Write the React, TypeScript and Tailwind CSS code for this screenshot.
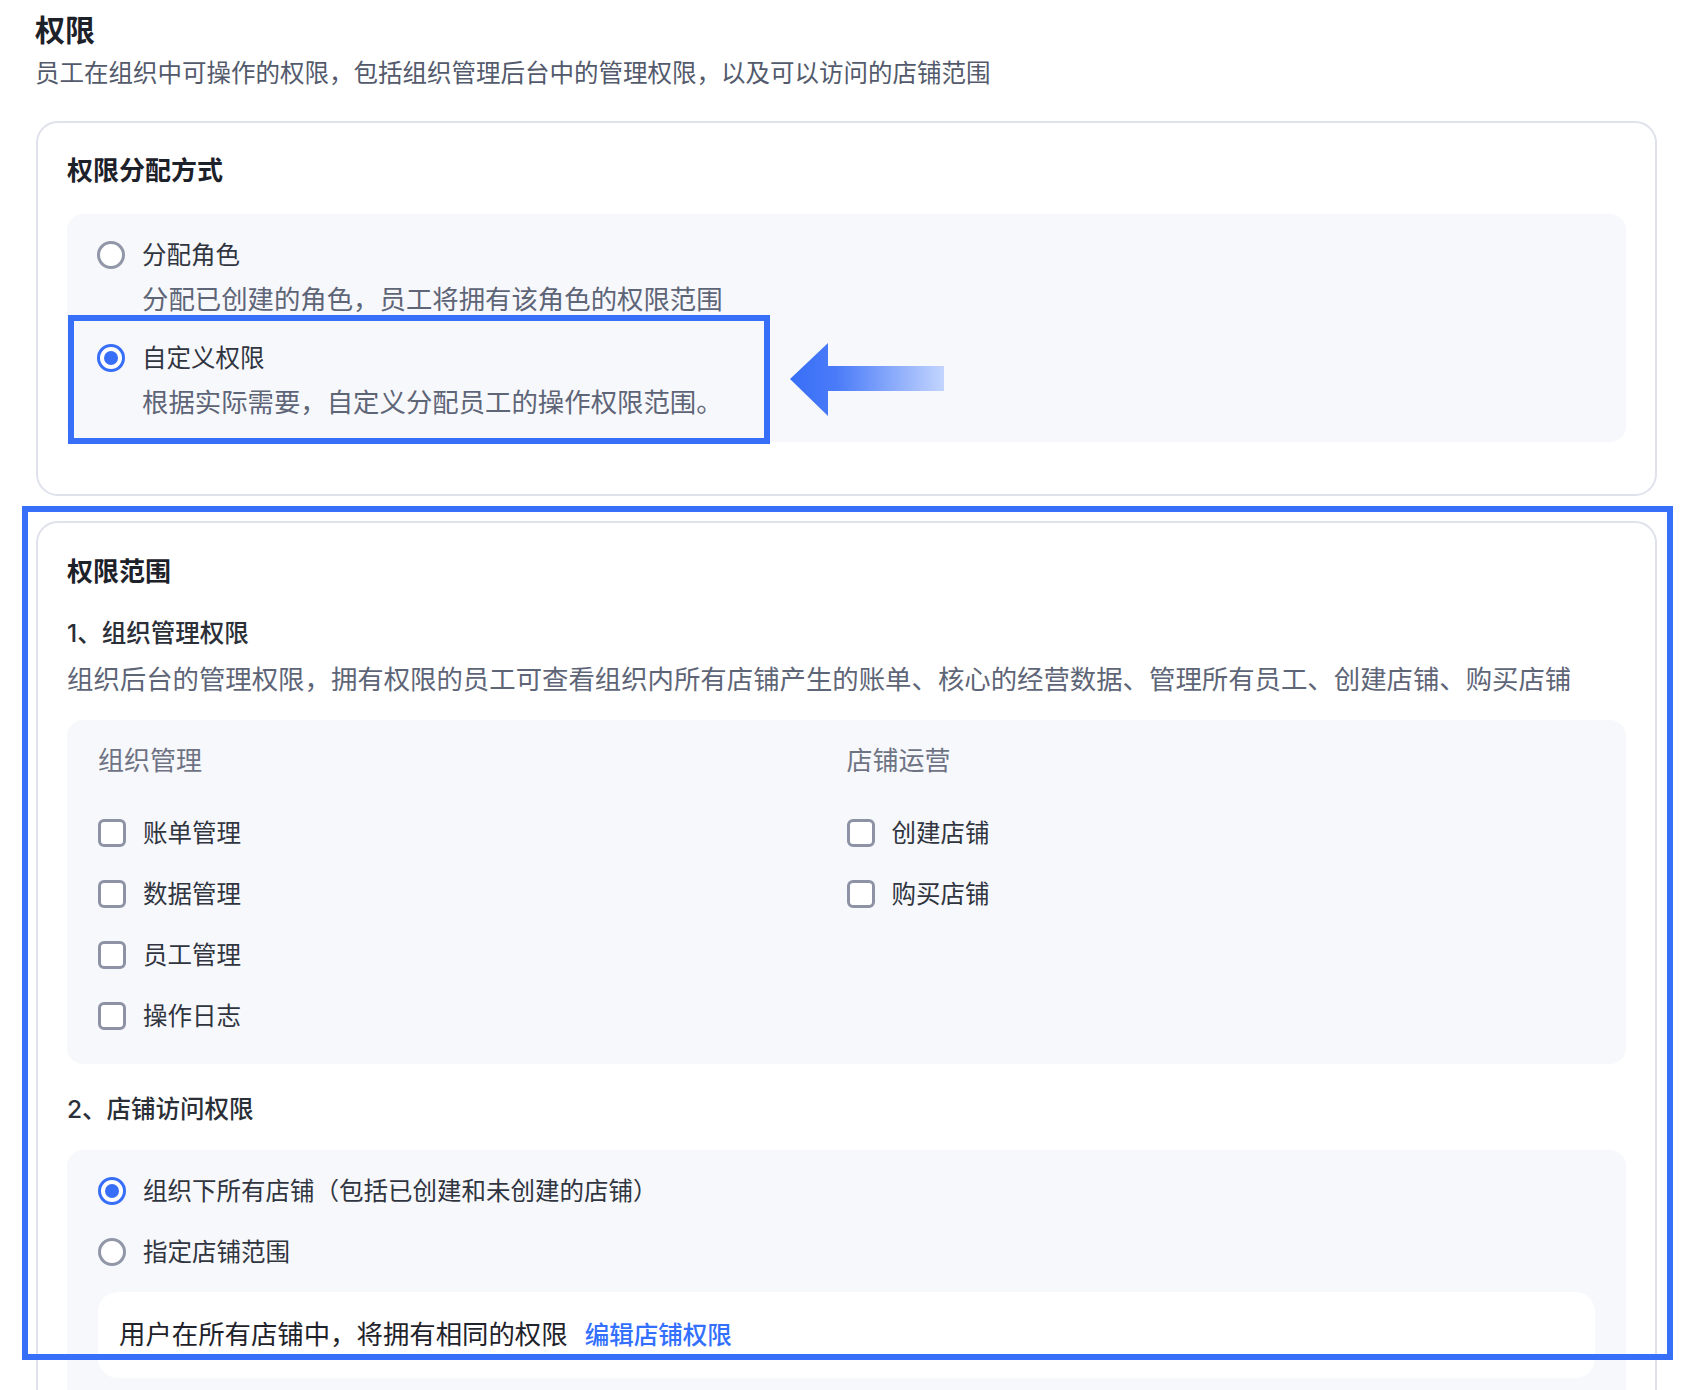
const FONT = "font-['Inter','Noto_Sans_CJK_SC',sans-serif]";

function Radio({ checked }: { checked?: boolean }) {
  return checked ? (
    <span className="flex h-[28px] w-[28px] shrink-0 items-center justify-center rounded-full border-[3px] border-[#386ff8] bg-white">
      <span className="h-[14px] w-[14px] rounded-full bg-[#386ff8]" />
    </span>
  ) : (
    <span className="h-[28px] w-[28px] shrink-0 rounded-full border-[3px] border-[#9197a8] bg-white" />
  );
}

function Checkbox() {
  return <span className="h-[28px] w-[28px] shrink-0 rounded-[6px] border-[3px] border-[#8d93a5] bg-white" />;
}

function CheckItem({ label }: { label: string }) {
  return (
    <div className="flex h-[36px] items-center gap-[17px]">
      <Checkbox />
      <span className="text-[24.5px] leading-[36px] text-[#30353f]">{label}</span>
    </div>
  );
}

function RadioLine({ label, checked }: { label: string; checked?: boolean }) {
  return (
    <div className="flex h-[36px] items-center gap-[17px]">
      <Radio checked={checked} />
      <span className="text-[24.5px] leading-[36px] text-[#30353f]">{label}</span>
    </div>
  );
}

export default function App() {
  const orgItems = ["账单管理", "数据管理", "员工管理", "操作日志"];
  const shopItems = ["创建店铺", "购买店铺"];

  return (
    <div className={`relative h-[1390px] w-[1700px] overflow-hidden bg-white px-[35px] pt-[12px] ${FONT}`}>
      <h1 className="text-[30px] font-semibold leading-[36px] text-[#1d2129]">权限</h1>
      <p className="mt-[7px] text-[24.5px] leading-[36px] text-[#535a6c]">
        员工在组织中可操作的权限，包括组织管理后台中的管理权限，以及可以访问的店铺范围
      </p>

      {/* 权限分配方式 */}
      <div className="ml-[1px] mt-[30px] w-[1621px] rounded-[22px] border-2 border-[#dfe2eb] px-[29px] pb-[52px] pt-[30px]">
        <div className="text-[26px] font-semibold leading-[36px] text-[#1d2129]">权限分配方式</div>
        <div className="mt-[25px] rounded-[16px] bg-[#f7f8fc] px-[30px] pb-[22px] pt-[23px]">
          <RadioLine label="分配角色" />
          <div className="mt-[8px] pl-[45px] text-[26.4px] leading-[36px] text-[#5e6577]">
            分配已创建的角色，员工将拥有该角色的权限范围
          </div>
          <div className="mt-[23px]">
            <RadioLine label="自定义权限" checked />
          </div>
          <div className="mt-[8px] pl-[45px] text-[26.4px] leading-[36px] text-[#5e6577]">
            根据实际需要，自定义分配员工的操作权限范围。
          </div>
        </div>
      </div>

      {/* 权限范围 */}
      <div className="ml-[1px] mt-[25px] w-[1621px] rounded-[22px] border-2 border-[#dfe2eb] px-[29px] pb-[52px] pt-[31px]">
        <div className="text-[26px] font-semibold leading-[36px] text-[#1d2129]">权限范围</div>
        <div className="mt-[25px] text-[24.5px] font-medium leading-[36px] text-[#2b2f38]">1、组织管理权限</div>
        <div className="mt-[10px] text-[26.4px] leading-[36px] text-[#5e6577]">
          组织后台的管理权限，拥有权限的员工可查看组织内所有店铺产生的账单、核心的经营数据、管理所有员工、创建店铺、购买店铺
        </div>
        <div className="mt-[23px] grid grid-cols-2 rounded-[16px] bg-[#f7f8fc] px-[31px] pb-[30px] pt-[23px]">
          <div>
            <div className="text-[26px] leading-[36px] text-[#6e7384]">组织管理</div>
            <div className="mt-[36px] flex flex-col gap-[25px]">
              {orgItems.map((item) => (
                <CheckItem key={item} label={item} />
              ))}
            </div>
          </div>
          <div>
            <div className="text-[26px] leading-[36px] text-[#6e7384]">店铺运营</div>
            <div className="mt-[36px] flex flex-col gap-[25px]">
              {shopItems.map((item) => (
                <CheckItem key={item} label={item} />
              ))}
            </div>
          </div>
        </div>

        <div className="mt-[27px] text-[24.5px] font-medium leading-[36px] text-[#2b2f38]">2、店铺访问权限</div>
        <div className="mt-[23px] rounded-[16px] bg-[#f7f8fc] px-[31px] pb-[30px] pt-[23px]">
          <RadioLine label="组织下所有店铺（包括已创建和未创建的店铺）" checked />
          <div className="mt-[25px]">
            <RadioLine label="指定店铺范围" />
          </div>
          <div className="mt-[22px] rounded-[20px] bg-white px-[21px] pb-[25px] pt-[24px] text-[26.4px] leading-[36px] text-[#1f232b]">
            用户在所有店铺中，将拥有相同的权限
            <span className="ml-[17px] text-[24.5px] font-medium text-[#3370ff]">编辑店铺权限</span>
          </div>
        </div>
      </div>

      {/* annotations */}
      <div className="absolute left-[68px] top-[315px] h-[129px] w-[702px] border-[6px] border-[#386ff8]" />
      <svg className="absolute left-[788px] top-[341px]" width="160" height="78" viewBox="0 0 160 78">
        <defs>
          <linearGradient id="arrowGrad" x1="0" y1="0" x2="1" y2="0">
            <stop offset="0" stopColor="#386ff8" />
            <stop offset="0.3" stopColor="#4a7bf8" />
            <stop offset="1" stopColor="#c3d5fe" />
          </linearGradient>
        </defs>
        <polygon points="2,38 40,2 40,25 156,25 156,50 40,50 40,75" fill="url(#arrowGrad)" />
      </svg>
      <div className="absolute left-[22px] top-[506px] h-[854px] w-[1651px] border-[6px] border-[#386ff8]" />
    </div>
  );
}
